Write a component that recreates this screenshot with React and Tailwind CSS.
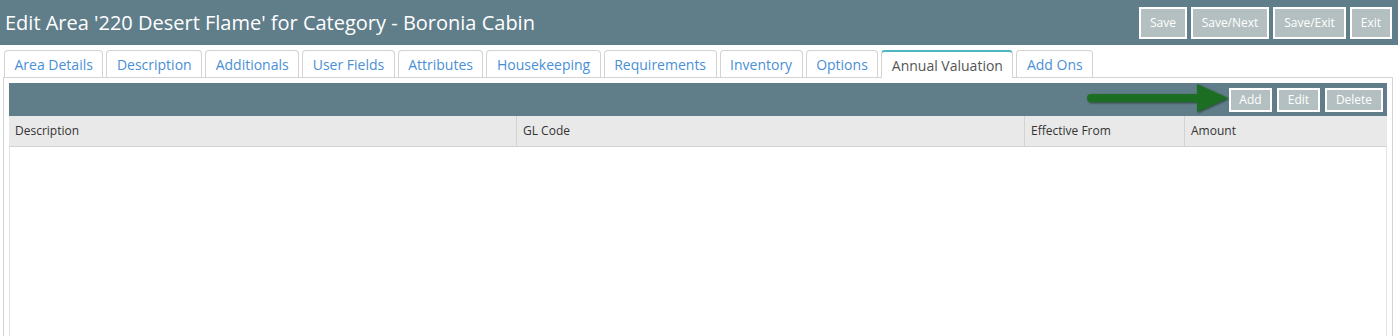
import React from "react";

const tabs = [
  "Area Details",
  "Description",
  "Additionals",
  "User Fields",
  "Attributes",
  "Housekeeping",
  "Requirements",
  "Inventory",
  "Options",
  "Annual Valuation",
  "Add Ons",
];

function HeadBtn({ children, w }) {
  return (
    <button
      className={`h-8 border-2 border-white bg-[#b3bfc0] text-[12px] text-white leading-none ${w}`}
    >
      {children}
    </button>
  );
}

function BarBtn({ children, w }) {
  return (
    <button
      className={`h-6 border-2 border-white bg-[#b3bfc0] text-[12px] text-white leading-none ${w}`}
    >
      {children}
    </button>
  );
}

export default function App() {
  return (
    <div
      className="h-[336px] w-[1398px] overflow-hidden bg-white flex flex-col"
      style={{ fontFamily: '"Open Sans", "Noto Sans", sans-serif' }}
    >
      <div className="h-[45px] shrink-0 bg-[#607d8a] flex items-center justify-between pl-[5px] pr-[6px]">
        <h1 className="text-[20px] text-white leading-none">
          Edit Area '220 Desert Flame' for Category - Boronia Cabin
        </h1>
        <div className="flex gap-1 pt-[1px]">
          <HeadBtn w="w-[48px]">Save</HeadBtn>
          <HeadBtn w="w-[78px]">Save/Next</HeadBtn>
          <HeadBtn w="w-[73px]">Save/Exit</HeadBtn>
          <HeadBtn w="w-[42px]">Exit</HeadBtn>
        </div>
      </div>

      <div className="mt-[5px] pl-[4px] flex gap-[3px] relative z-10 shrink-0">
        {tabs.map((t) => {
          const active = t === "Annual Valuation";
          return (
            <div
              key={t}
              className={
                active
                  ? "h-[28px] -mb-px bg-white border border-[#d3d3d3] border-t-2 border-t-[#4db6bf] border-b-0 rounded-t-[4px] px-[9.5px] flex items-center text-[14px] text-[#555555]"
                  : "h-[27px] bg-white border border-[#d3d3d3] border-b-0 rounded-t-[4px] px-[9.5px] flex items-center text-[14px] text-[#4a8fd6]"
              }
            >
              {t}
            </div>
          );
        })}
      </div>

      <div className="ml-[3px] mr-[5px] flex-1 border border-b-0 border-[#d3d3d3] pt-[5px] px-[5px] flex flex-col">
        <div className="relative h-[33px] shrink-0 bg-[#607d8a] flex items-center justify-end gap-[5px] pr-[4px]">
          <BarBtn w="w-[43px]">Add</BarBtn>
          <BarBtn w="w-[43px]">Edit</BarBtn>
          <BarBtn w="w-[58px]">Delete</BarBtn>
          <svg
            className="absolute top-[-2px] left-[1074px]"
            width="150"
            height="36"
            viewBox="0 0 150 36"
          >
            <defs>
              <filter id="sh" x="-10%" y="-30%" width="120%" height="160%">
                <feDropShadow dx="1" dy="1" stdDeviation="1.2" floodColor="#0b2a10" floodOpacity="0.7" />
              </filter>
            </defs>
            <g filter="url(#sh)" fill="#1f6e24">
              <rect x="4" y="13" width="116" height="8" rx="4" />
              <polygon points="114,3 145,17 114,31" />
            </g>
          </svg>
        </div>
        <div className="h-[31px] shrink-0 bg-[#e9e9e9] border-b border-[#d3d3d3] grid grid-cols-[508px_508px_160px_1fr] text-[12px] text-[#333333]">
          <div className="pl-[6px] flex items-center border-r border-[#d3d3d3]">Description</div>
          <div className="pl-[6px] flex items-center border-r border-[#d3d3d3]">GL Code</div>
          <div className="pl-[6px] flex items-center border-r border-[#d3d3d3]">Effective From</div>
          <div className="pl-[6px] flex items-center">Amount</div>
        </div>
        <div className="flex-1 border-x border-[#e3e3e3]" />
      </div>
    </div>
  );
}
